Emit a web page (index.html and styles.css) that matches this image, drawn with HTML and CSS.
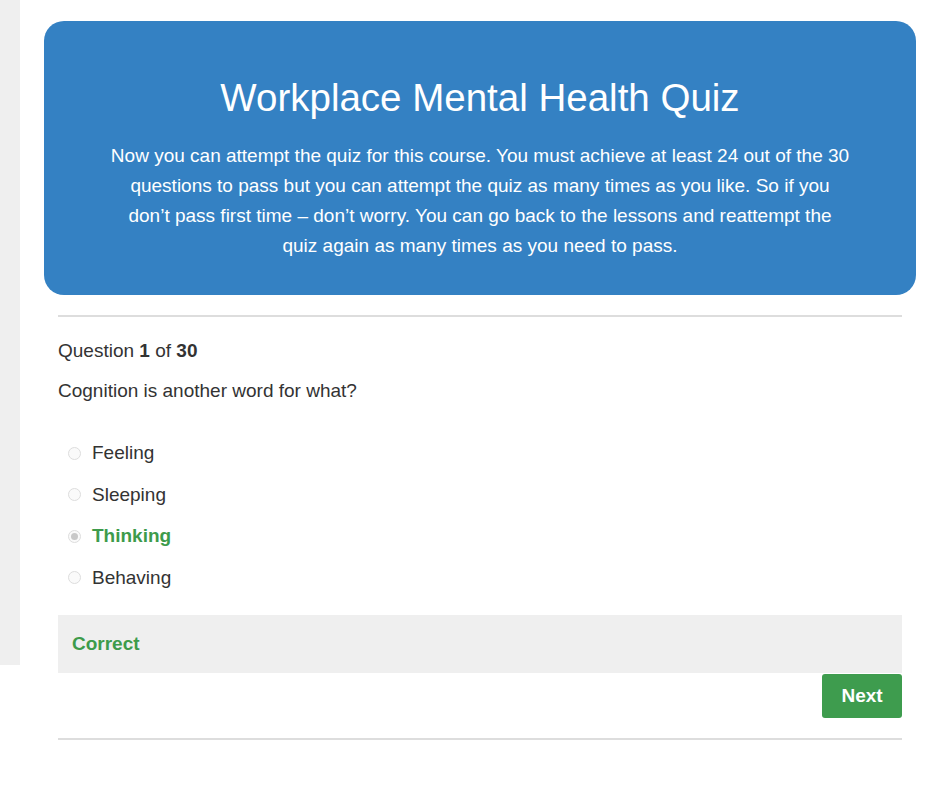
FILE: index.html
```html
<!DOCTYPE html>
<html lang="en">
  <head>
    <meta charset="UTF-8" />
    <meta name="viewport" content="width=device-width, initial-scale=1.0" />
    <link rel="stylesheet" href="styles.css">
  </head>
  <body>
    <div class="sidebar"></div>
    <div class="content">
      <div class="banner">
        <h1 class="banner-title">Workplace Mental Health Quiz</h1>
        <p class="banner-text">
          Now you can attempt the quiz for this course. You must achieve at least 24 out of the 30
          questions to pass but you can attempt the quiz as many times as you like. So if you
          don’t pass first time – don’t worry. You can go back to the lessons and reattempt the
          quiz again as many times as you need to pass.
        </p>
      </div>

      <div class="quiz">
        <div class="quiz-count">Question <b>1</b> of <b>30</b></div>
        <div class="quiz-question">Cognition is another word for what?</div>

        <ul class="answers">
          <li class="answer"><span class="radio"></span>Feeling</li>
          <li class="answer"><span class="radio"></span>Sleeping</li>
          <li class="answer answer-correct"><span class="radio radio-checked"></span>Thinking</li>
          <li class="answer"><span class="radio"></span>Behaving</li>
        </ul>

        <div class="result">Correct</div>
        <div class="quiz-actions">
          <button class="next-btn">Next</button>
        </div>
      </div>
    </div>
  </body>
</html>
```

FILE: styles.css
```css
body {
  margin: 0;
  display: flex;
  align-items: flex-start;
  font-family: "Liberation Sans", Arial, sans-serif;
  color: #333;
  background-color: #fff;
}

.sidebar {
  width: 20px;
  height: 665px;
  background-color: #efefef;
  flex-shrink: 0;
}

.content {
  flex: 1;
  padding: 21px 24px 0 24px;
}

.banner {
  height: 274px;
  box-sizing: border-box;
  padding: 57px 65.75px 0;
  background-color: #3481c3; /* blue header */
  border-radius: 20px;
  color: #fff;
  text-align: center;
}

.banner-title {
  margin: 0;
  font-size: 38.5px;
  font-weight: normal;
  line-height: 40px;
}

.banner-text {
  margin: 23px 0 0;
  font-size: 19px;
  line-height: 30px;
}

.quiz {
  margin: 20px 14px 0;
  border-top: 2px solid #ddd;
  border-bottom: 2px solid #ddd;
  padding-bottom: 20px;
}

.quiz-count {
  margin-top: 21px;
  font-size: 19px;
  line-height: 26px;
}

.quiz-question {
  margin-top: 14px;
  font-size: 19px;
  line-height: 26px;
}

.answers {
  list-style: none;
  margin: 36px 0 0;
  padding: 0;
}

.answer {
  display: flex;
  align-items: center;
  gap: 11px;
  padding-left: 10px;
  height: 26px;
  margin-bottom: 15.5px;
  font-size: 19px;
}

.answer-correct {
  color: #3d9b4b;
  font-weight: bold;
}

.radio {
  width: 11px;
  height: 11px;
  border: 1px solid #ddd;
  border-radius: 50%;
  background-color: #fafafa;
  display: flex;
  align-items: center;
  justify-content: center;
}

.radio-checked::after {
  content: "";
  width: 7px;
  height: 7px;
  border-radius: 50%;
  background-color: #c8c8c8;
}

.result {
  margin-top: 24px;
  height: 58px;
  line-height: 58px;
  padding: 0 14px;
  background-color: #efefef;
  color: #3d9b4b;
  font-weight: bold;
  font-size: 19px;
}

.quiz-actions {
  display: flex;
  justify-content: flex-end;
  margin-top: 1px;
}

.next-btn {
  width: 80px;
  height: 44px;
  border: none;
  border-radius: 3px;
  background-color: #3e9c4e;
  color: #fff;
  font-family: "Liberation Sans", Arial, sans-serif;
  font-size: 19px;
  font-weight: bold;
}
```
